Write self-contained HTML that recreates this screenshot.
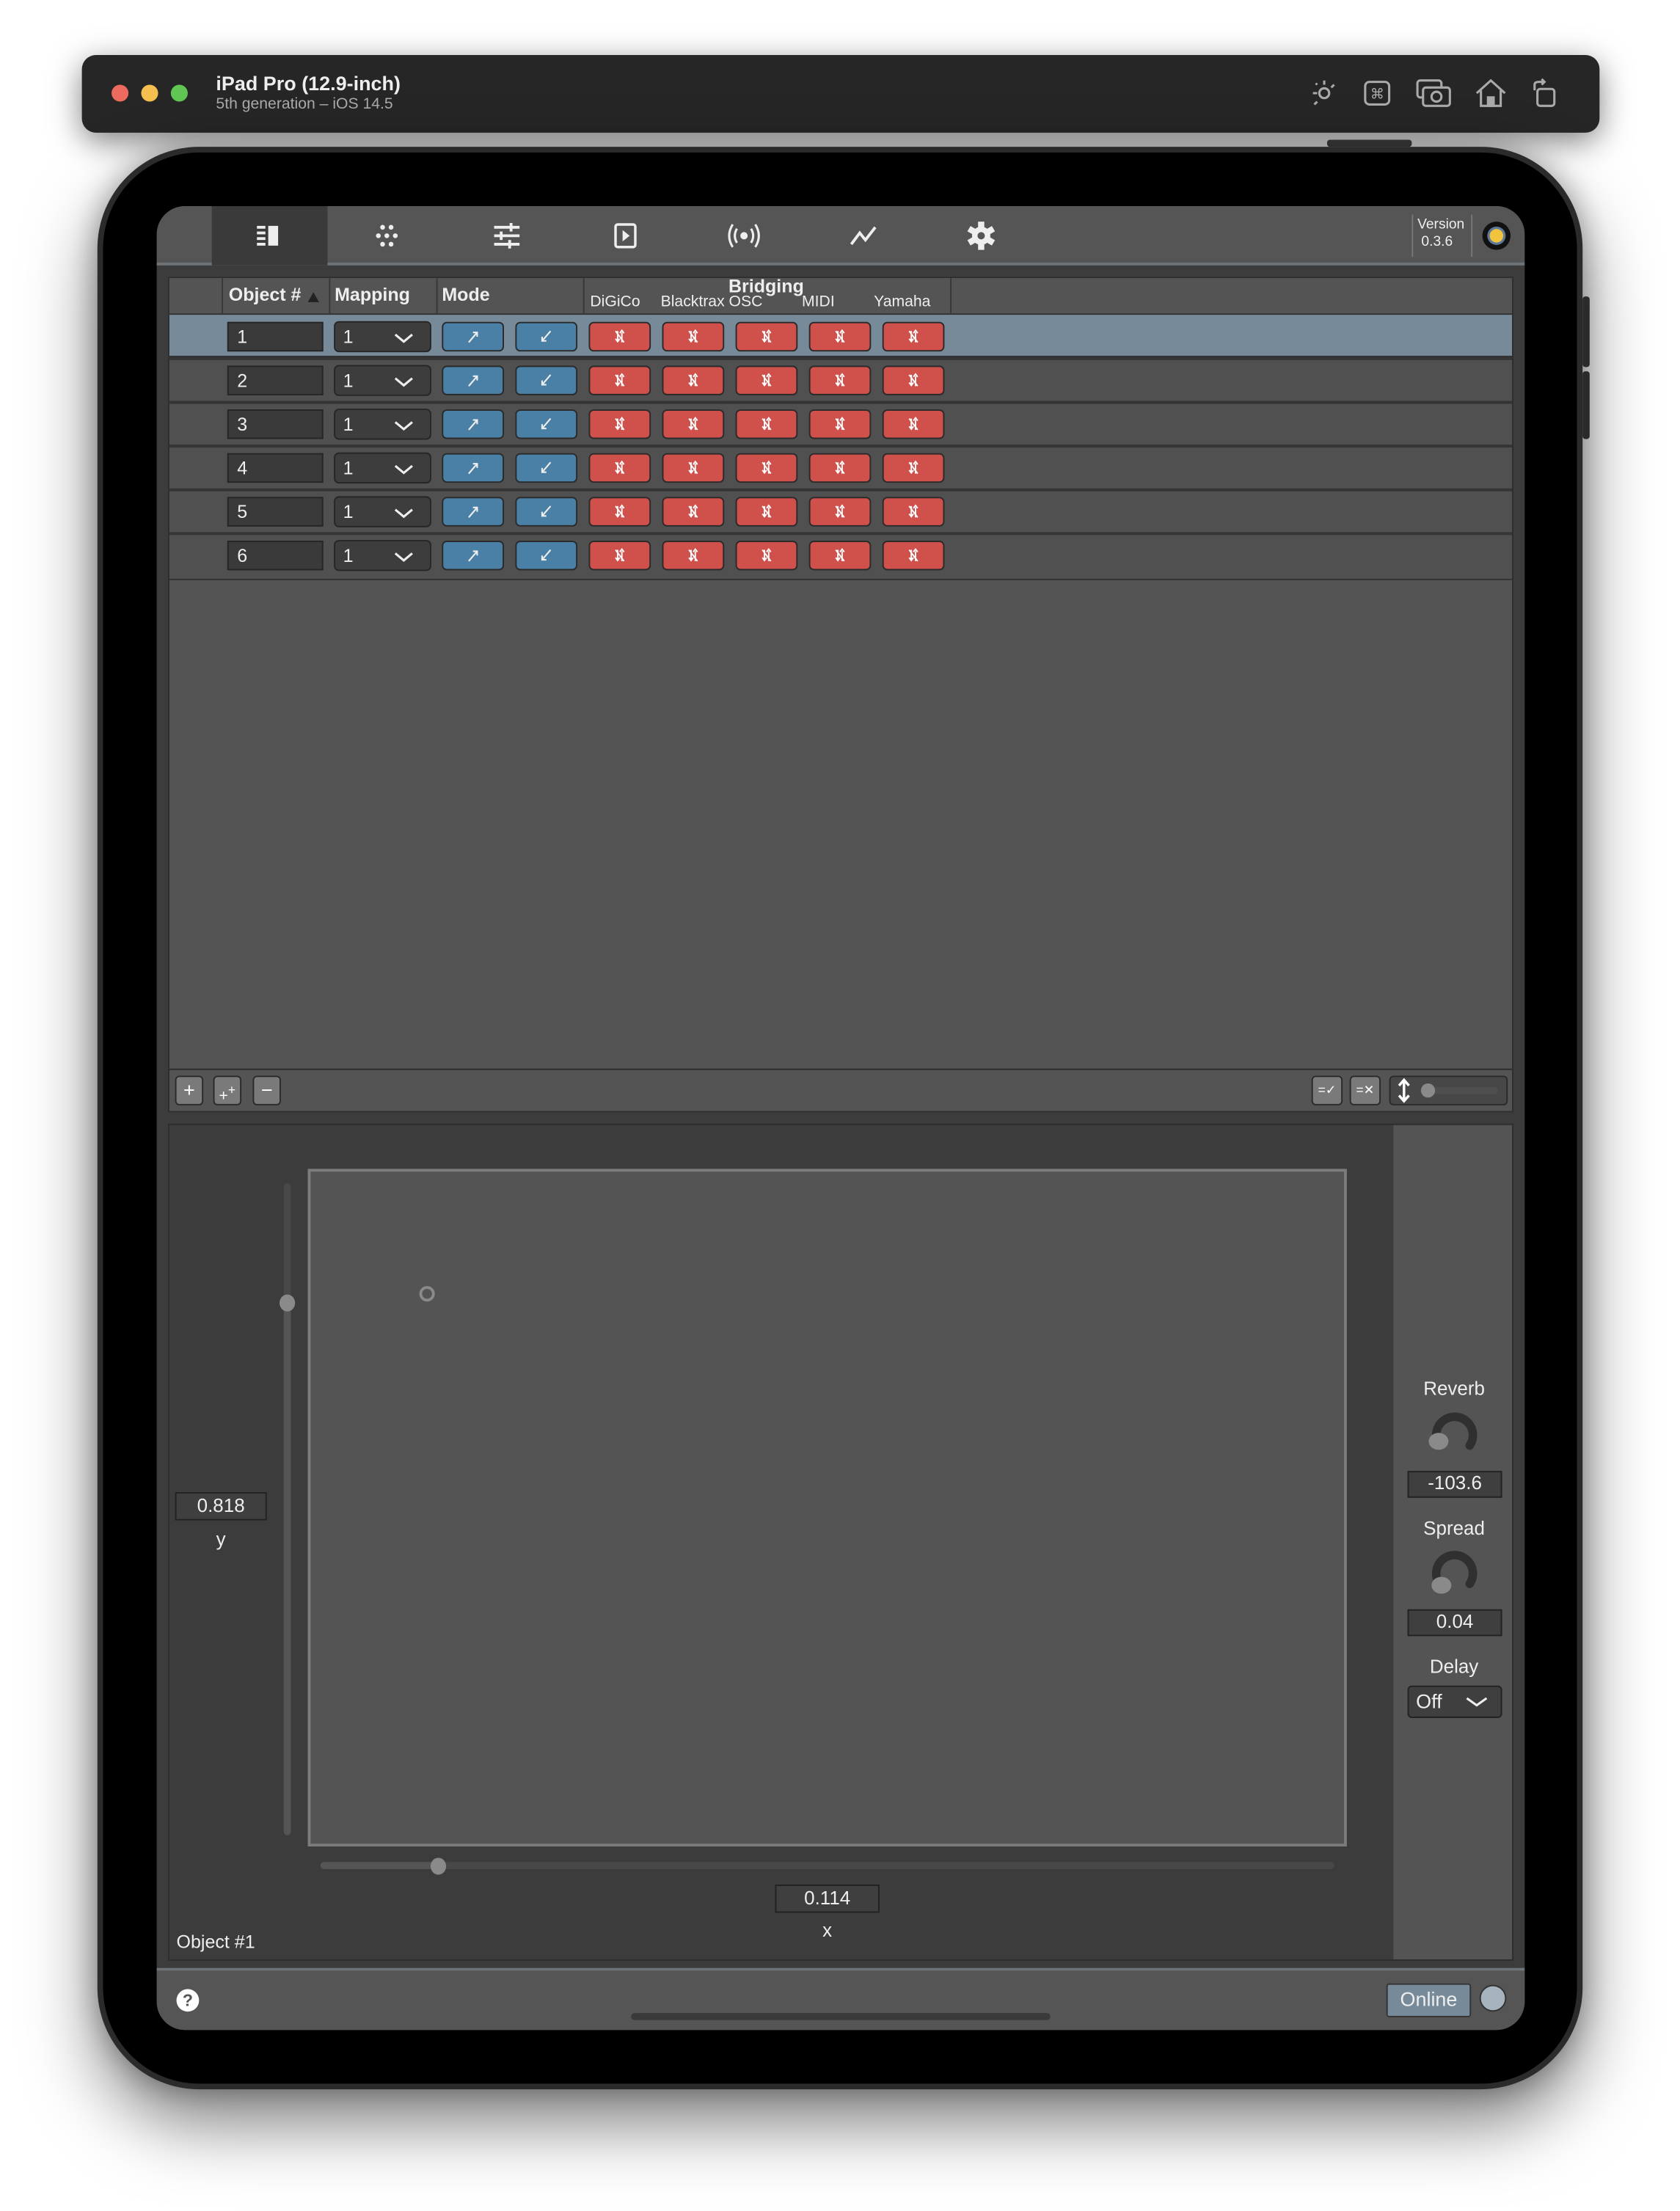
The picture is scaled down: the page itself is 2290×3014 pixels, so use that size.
<!DOCTYPE html>
<html><head><meta charset="utf-8">
<style>
html,body{margin:0;padding:0;width:2290px;height:3014px;overflow:hidden;background:#fff;}
#s{position:absolute;left:0;top:0;width:1190px;height:1566px;transform:scale(1.92437);transform-origin:0 0;font-family:"Liberation Sans",sans-serif;color:#eee;}
.a{position:absolute;}
.num{position:absolute;background:#3a3a3a;border:1px solid #262626;box-sizing:border-box;font-size:13px;color:#eee;padding-left:6px;line-height:19px;}
.row{position:absolute;left:120px;width:951px;height:31px;background:#505050;border-bottom:1px solid #333;box-sizing:border-box;}
.tb{position:absolute;top:762px;width:20px;height:21px;background:#7a7a7a;border:1px solid #2a2a2a;border-radius:3px;box-sizing:border-box;color:#fff;font-size:14px;text-align:center;line-height:18px;}
.lbl{position:absolute;font-size:13.5px;color:#eee;text-align:center;}
.box{position:absolute;background:#3f3f3f;border:1px solid #222;box-sizing:border-box;font-size:13.5px;text-align:center;line-height:17px;}
</style></head><body>
<div id="s">
<div class="a" style="left:58px;top:39px;width:1075px;height:55px;background:#262626;border-radius:10px;box-shadow:0 6px 22px rgba(0,0,0,.5);"></div>
<div class="a" style="left:79px;top:60px;width:12px;height:12px;border-radius:6px;background:#ed6a5e;"></div>
<div class="a" style="left:100px;top:60px;width:12px;height:12px;border-radius:6px;background:#f4bf4f;"></div>
<div class="a" style="left:121px;top:60px;width:12px;height:12px;border-radius:6px;background:#61c554;"></div>
<div class="a" style="left:153px;top:51px;font-size:14px;font-weight:bold;color:#eee;">iPad Pro (12.9-inch)</div>
<div class="a" style="left:153px;top:68px;font-size:11px;color:#aaa;">5th generation – iOS 14.5</div>
<svg class="a" style="left:925px;top:54px" width="185" height="26" viewBox="0 0 185 26" fill="none" stroke="#aaa" stroke-width="1.6">
 <circle cx="13" cy="12" r="3.5"/><path d="M13 3v3M20 6l-2 2M5 12h3M6 20l2-2M7 5l1 1"/>
 <rect x="42" y="4" width="17" height="16" rx="3"/><text x="50.5" y="16" font-size="10" fill="#aaa" stroke="none" text-anchor="middle" font-family="DejaVu Sans">⌘</text>
 <rect x="79" y="3" width="17" height="12" rx="2"/><rect x="83" y="8" width="19" height="13" rx="2" fill="#262626"/><circle cx="92.5" cy="14.5" r="3.5"/>
 <path d="M121 12l10-9 10 9M124 10v11h14V10" /><rect x="129" y="15" width="4" height="6" fill="#aaa"/>
 <rect x="164" y="9" width="12" height="12" rx="2"/><path d="M162 10V6q0-2 3-2h4M167 2l2 2-2 2"/>
</svg>
<div class="a" style="left:940px;top:99px;width:60px;height:5px;background:#3a3a3a;border-radius:2px;"></div>
<div class="a" style="left:69px;top:104px;width:1052px;height:1376px;background:#2b2b2b;border-radius:72px;box-shadow:0 24px 50px rgba(0,0,0,.5), 0 0 20px rgba(0,0,0,.3);"></div>
<div class="a" style="left:73px;top:108px;width:1044px;height:1368px;background:#000;border-radius:68px;"></div>
<div class="a" style="left:1121px;top:210px;width:5px;height:50px;background:#2b2b2b;border-radius:2px;"></div>
<div class="a" style="left:1121px;top:263px;width:5px;height:48px;background:#2b2b2b;border-radius:2px;"></div>
<div class="a" style="left:111px;top:146px;width:969px;height:1292px;background:#3c3c3c;border-radius:20px;overflow:hidden;">
 <div class="a" style="left:0;top:0;width:969px;height:42px;background:#555;"></div>
 <div class="a" style="left:0;top:40px;width:969px;height:2px;background:#6e7377;"></div>
 <div class="a" style="left:39px;top:0;width:82px;height:42px;background:#3a3a3a;"></div>
 <svg class="a" style="left:0;top:0" width="969" height="42" viewBox="0 0 969 42" fill="#eee" stroke="#eee">
  <g stroke="none"><rect x="71" y="14" width="6" height="2"/><rect x="71" y="18" width="6" height="2"/><rect x="71" y="22" width="6" height="2"/><rect x="71" y="26" width="6" height="2"/><rect x="79" y="14" width="7" height="14"/></g>
  <g stroke="none"><circle cx="160" cy="15" r="1.7"/><circle cx="166" cy="15" r="1.7"/><circle cx="157" cy="21" r="1.7"/><circle cx="163" cy="21" r="1.7"/><circle cx="169" cy="21" r="1.7"/><circle cx="160" cy="27" r="1.7"/><circle cx="166" cy="27" r="1.7"/></g>
  <g stroke-width="2" fill="none"><path d="M239 15h18M239 21h18M239 27h18"/><path d="M251 12v6M244 18v6M250 24v6"/></g>
  <rect x="325" y="13" width="14" height="16" rx="1.5" fill="none" stroke-width="1.8"/><path d="M330 17l5 4-5 4z" stroke="none"/>
  <g fill="none" stroke-width="1.6"><circle cx="416" cy="21" r="1.8" fill="#eee"/><path d="M411 16q-3 5 0 10M421 16q3 5 0 10M408 13q-5 8 0 16M424 13q5 8 0 16"/></g>
  <path d="M492 27l6-8 4 5 7-9" fill="none" stroke-width="2"/>
  <g transform="translate(584 21)" stroke="none"><circle r="6.5"/><g><rect x="-2.2" y="-10" width="4.4" height="20"/><rect x="-2.2" y="-10" width="4.4" height="20" transform="rotate(60)"/><rect x="-2.2" y="-10" width="4.4" height="20" transform="rotate(120)"/></g><circle r="2.6" fill="#555"/></g>
  <rect x="889" y="6" width="1" height="30" fill="#777" stroke="none"/><rect x="931" y="6" width="1" height="30" fill="#777" stroke="none"/>
  <circle cx="949" cy="21" r="10" fill="#111" stroke="none"/><circle cx="949" cy="21" r="6.5" fill="#5e7a98" stroke="none"/><circle cx="949" cy="21" r="4.8" fill="#f2c43d" stroke="none"/>
 </svg>
 <div class="a" style="left:893px;top:8px;font-size:10px;line-height:12px;color:#eee;">Version<br>&nbsp;0.3.6</div>
</div>
<div class="a" style="left:119px;top:196px;width:953px;height:562px;background:#545454;border:1px solid #2e2e2e;box-sizing:border-box;"></div>
<div class="a" style="left:120px;top:197px;width:951px;height:25px;background:#545454;border-bottom:2px solid #333;"></div>
<svg class="a" style="left:120px;top:197px" width="560" height="25"><g fill="#383838"><rect x="37" width="1" height="25"/><rect x="113" width="1" height="25"/><rect x="189" width="1" height="25"/><rect x="293" width="1" height="25"/><rect x="553" width="1" height="25"/></g><path d="M98 17l4-7 4 7z" fill="#222"/></svg>
<div class="a" style="left:162px;top:201px;font-size:13px;font-weight:bold;">Object #</div>
<div class="a" style="left:237px;top:201px;font-size:13px;font-weight:bold;">Mapping</div>
<div class="a" style="left:313px;top:201px;font-size:13px;font-weight:bold;">Mode</div>
<div class="a" style="left:516px;top:195px;font-size:13px;font-weight:bold;">Bridging</div>
<div class="a" style="left:418px;top:208px;font-size:11px;">DiGiCo</div>
<div class="a" style="left:468px;top:208px;font-size:11px;">Blacktrax OSC</div>
<div class="a" style="left:568px;top:208px;font-size:11px;">MIDI</div>
<div class="a" style="left:619px;top:208px;font-size:11px;">Yamaha</div>
<div class="row" style="top:223px;background:#768a99;border-bottom:2px solid #333"></div>
<div class="row" style="top:254px;border-top:1px solid #333"></div>
<div class="row" style="top:285px;border-top:1px solid #333"></div>
<div class="row" style="top:316px;border-top:1px solid #333"></div>
<div class="row" style="top:347px;border-top:1px solid #333"></div>
<div class="row" style="top:378px;border-top:1px solid #333;height:33px"></div>
<svg width="0" height="0" style="position:absolute"><defs>
<g id="chev"><path d="M0 0l6 5 6-5" fill="none" stroke="#eee" stroke-width="1.6"/></g>
<g id="ur"><path d="M-3 4l6-7M0-3h3v3" fill="none" stroke="#eee" stroke-width="1.1"/></g>
<g id="dl"><path d="M3-4l-6 7M0 3h-3v-3" fill="none" stroke="#eee" stroke-width="1.1"/></g>
<g id="rx"><path d="M-3-4l6 8M-1.5-4v7M1.5 4v-7M-3 1.5l1.5 2 1.5-2M0-2.5l1.5-2 1.5 2" fill="none" stroke="#fff" stroke-width="1"/></g>
</defs></svg>
<div class="num" style="left:161px;top:228px;width:68px;height:21px;">1</div>
<div class="num" style="left:161px;top:259px;width:68px;height:21px;">2</div>
<div class="num" style="left:161px;top:290px;width:68px;height:21px;">3</div>
<div class="num" style="left:161px;top:321px;width:68px;height:21px;">4</div>
<div class="num" style="left:161px;top:352px;width:68px;height:21px;">5</div>
<div class="num" style="left:161px;top:383px;width:68px;height:21px;">6</div>
<svg class="a" style="left:0;top:0" width="700" height="420">
<defs><g id="cells">
 <rect x="237" y="0" width="68" height="21" rx="3" fill="#3d3d3d" stroke="#262626"/>
 <text x="243" y="15" font-size="13" fill="#eee" font-family="Liberation Sans">1</text>
 <use href="#chev" x="280" y="9"/>
 <rect x="313.5" y="0.5" width="43" height="20" rx="3" fill="#4a80a6" stroke="#2a2a2a"/><use href="#ur" x="335" y="10.5"/>
 <rect x="365.5" y="0.5" width="43" height="20" rx="3" fill="#4a80a6" stroke="#2a2a2a"/><use href="#dl" x="387" y="10.5"/>
 <rect x="417.5" y="0.5" width="43" height="20" rx="3" fill="#d0504c" stroke="#2a2a2a"/><use href="#rx" x="439" y="10.5"/>
 <rect x="469.5" y="0.5" width="43" height="20" rx="3" fill="#d0504c" stroke="#2a2a2a"/><use href="#rx" x="491" y="10.5"/>
 <rect x="521.5" y="0.5" width="43" height="20" rx="3" fill="#d0504c" stroke="#2a2a2a"/><use href="#rx" x="543" y="10.5"/>
 <rect x="573.5" y="0.5" width="43" height="20" rx="3" fill="#d0504c" stroke="#2a2a2a"/><use href="#rx" x="595" y="10.5"/>
 <rect x="625.5" y="0.5" width="43" height="20" rx="3" fill="#d0504c" stroke="#2a2a2a"/><use href="#rx" x="647" y="10.5"/>
</g></defs>
<use href="#cells" y="228"/><use href="#cells" y="259"/><use href="#cells" y="290"/><use href="#cells" y="321"/><use href="#cells" y="352"/><use href="#cells" y="383"/>
</svg>
<div class="a" style="left:119px;top:757px;width:953px;height:31px;background:#545454;border:1px solid #2e2e2e;box-sizing:border-box;"></div>
<div class="tb" style="left:124px;">+</div>
<div class="tb" style="left:151px;font-size:11px;">+<sup style="font-size:9px">+</sup></div>
<div class="tb" style="left:179px;">−</div>
<div class="tb" style="left:929px;width:22px;font-size:9px;">=✓</div>
<div class="tb" style="left:956px;width:22px;font-size:9px;">=✕</div>
<div class="a" style="left:984px;top:762px;width:84px;height:21px;background:#474747;border:1px solid #2a2a2a;border-radius:3px;box-sizing:border-box;"></div>
<svg class="a" style="left:984px;top:762px" width="84" height="21"><path d="M10.5 4v13M7 7l3.5-4 3.5 4M7 14l3.5 4 3.5-4" stroke="#fff" stroke-width="1.8" fill="none"/><rect x="23" y="8" width="54" height="5" rx="2.5" fill="#4f4f4f"/><circle cx="27.5" cy="10.5" r="5" fill="#8a8a8a"/></svg>
<div class="a" style="left:119px;top:796px;width:953px;height:593px;background:#3c3c3c;border:1px solid #2e2e2e;box-sizing:border-box;"></div>
<div class="a" style="left:987px;top:797px;width:84px;height:591px;background:#545454;"></div>
<div class="a" style="left:218px;top:828px;width:736px;height:480px;background:#545454;border:2px solid #7c7c7c;box-sizing:border-box;"></div>
<div class="a" style="left:297px;top:911px;width:7px;height:7px;border:2px solid #8a8a8a;border-radius:50%;"></div>
<div class="a" style="left:201px;top:838px;width:5px;height:462px;background:#484848;border-radius:3px;"></div>
<div class="a" style="left:201px;top:923px;width:5px;height:377px;background:#555;border-radius:3px;"></div>
<div class="a" style="left:198px;top:917px;width:11px;height:12px;background:#8a8a8a;border-radius:50%;"></div>
<div class="box" style="left:124px;top:1057px;width:65px;height:20px;">0.818</div>
<div class="lbl" style="left:124px;top:1083px;width:65px;">y</div>
<div class="a" style="left:227px;top:1319px;width:718px;height:5px;background:#484848;border-radius:3px;"></div>
<div class="a" style="left:227px;top:1319px;width:84px;height:5px;background:#555;border-radius:3px;"></div>
<div class="a" style="left:305px;top:1316px;width:11px;height:12px;background:#8a8a8a;border-radius:50%;"></div>
<div class="box" style="left:549px;top:1335px;width:74px;height:20px;">0.114</div>
<div class="lbl" style="left:549px;top:1360px;width:74px;">x</div>
<div class="a" style="left:125px;top:1368px;font-size:13px;">Object #1</div>
<div class="lbl" style="left:987px;top:976px;width:86px;">Reverb</div>
<svg class="a" style="left:1007px;top:999px" width="46" height="34"><path d="M12 24A13 13 0 1 1 34 25" fill="none" stroke="#303030" stroke-width="6" stroke-linecap="round"/><ellipse cx="12" cy="22" rx="7" ry="6" fill="#8a8a8a"/></svg>
<div class="box" style="left:997px;top:1042px;width:67px;height:19px;line-height:16px;">-103.6</div>
<div class="lbl" style="left:987px;top:1075px;width:86px;">Spread</div>
<svg class="a" style="left:1007px;top:1097px" width="46" height="36"><path d="M12 24A13 13 0 1 1 34 25" fill="none" stroke="#303030" stroke-width="6" stroke-linecap="round"/><ellipse cx="14" cy="26" rx="7" ry="6" fill="#8a8a8a"/></svg>
<div class="box" style="left:997px;top:1140px;width:67px;height:19px;line-height:16px;">0.04</div>
<div class="lbl" style="left:987px;top:1173px;width:86px;">Delay</div>
<div class="a" style="left:997px;top:1194px;width:67px;height:23px;background:#3f3f3f;border:1px solid #222;border-radius:3px;box-sizing:border-box;font-size:14px;line-height:20px;padding-left:5px;">Off</div>
<svg class="a" style="left:1037px;top:1201px" width="18" height="10"><path d="M2 2l7 5 7-5" fill="none" stroke="#eee" stroke-width="1.6"/></svg>
<div class="a" style="left:111px;top:1394px;width:969px;height:44px;background:#555;border-top:2px solid #6e7377;box-sizing:border-box;border-radius:0 0 20px 20px;"></div>
<div class="a" style="left:125px;top:1409px;width:16px;height:16px;border-radius:50%;background:#fff;color:#555;font-size:12px;font-weight:bold;text-align:center;line-height:16px;">?</div>
<div class="a" style="left:447px;top:1426px;width:297px;height:5px;border-radius:3px;background:#3a3a3a;"></div>
<div class="a" style="left:982px;top:1405px;width:60px;height:24px;background:#768a99;border:1px solid #333;box-sizing:border-box;border-radius:2px;font-size:14px;text-align:center;line-height:21px;">Online</div>
<div class="a" style="left:1048px;top:1406px;width:19px;height:19px;border-radius:50%;background:#a8b4bd;border:1px solid #333;box-sizing:border-box;"></div>
</div>
</body></html>
